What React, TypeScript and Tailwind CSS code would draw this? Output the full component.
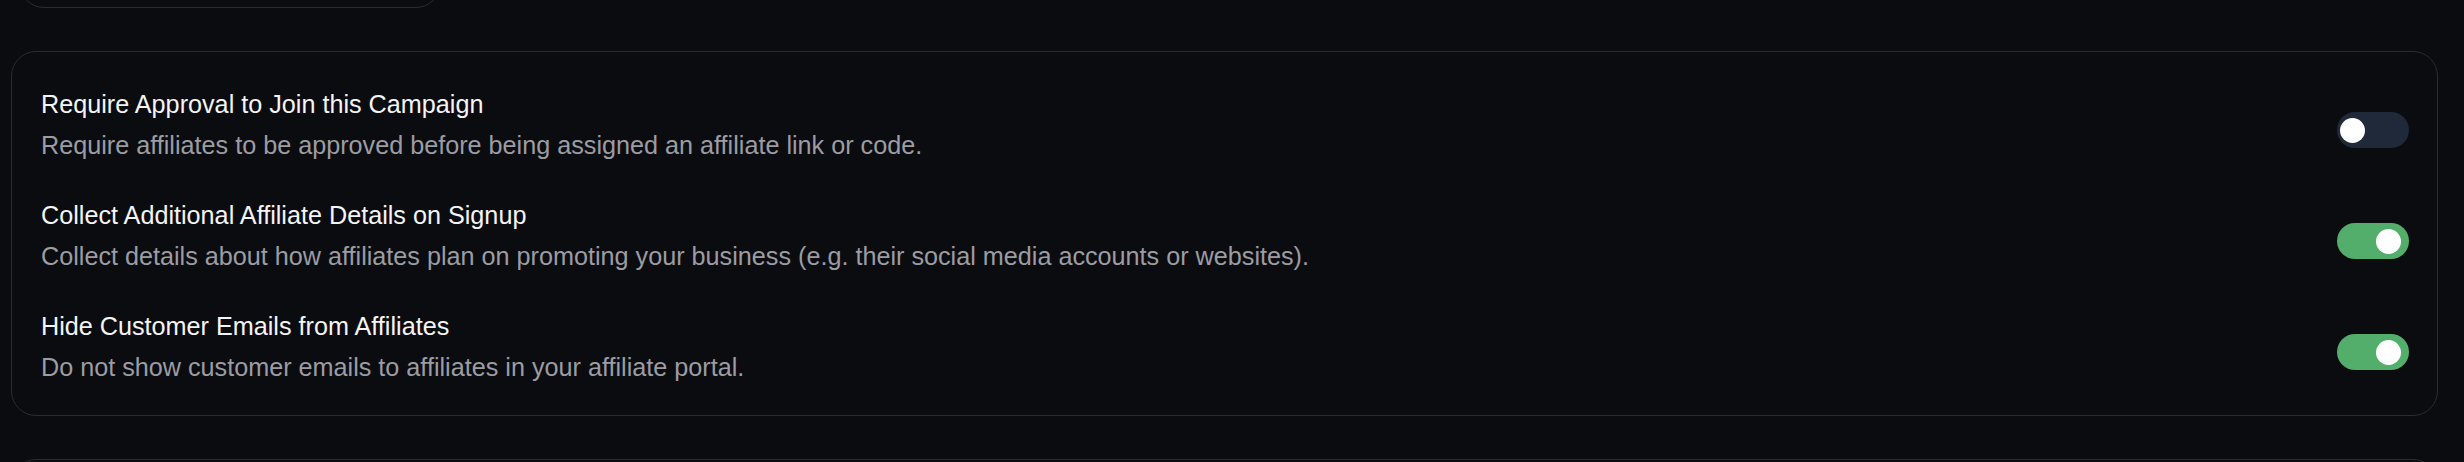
import React from "react";

const rows = [
  {
    title: "Require Approval to Join this Campaign",
    desc: "Require affiliates to be approved before being assigned an affiliate link or code.",
    on: false,
  },
  {
    title: "Collect Additional Affiliate Details on Signup",
    desc: "Collect details about how affiliates plan on promoting your business (e.g. their social media accounts or websites).",
    on: true,
  },
  {
    title: "Hide Customer Emails from Affiliates",
    desc: "Do not show customer emails to affiliates in your affiliate portal.",
    on: true,
  },
];

function Toggle({ on }: { on: boolean }) {
  return (
    <div
      className={
        on
          ? "relative mt-[26px] h-[36px] w-[72px] shrink-0 rounded-full bg-[#53ae6b]"
          : "relative mt-[26px] h-[36px] w-[72px] shrink-0 rounded-full bg-[#1f2939]"
      }
    >
      <div
        className={
          on
            ? "absolute top-[6px] left-[39px] h-[25px] w-[25px] rounded-full bg-white"
            : "absolute top-[6px] left-[3px] h-[25px] w-[25px] rounded-full bg-white"
        }
      />
    </div>
  );
}

export default function App() {
  return (
    <div
      className="h-[462px] w-[2464px] overflow-hidden bg-[#0b0c10] pl-[11px]"
      style={{ fontFamily: '"Liberation Sans", Arial, sans-serif' }}
    >
      <div className="ml-[8px] mt-[-53px] h-[61px] w-[422px] rounded-[25px] border border-[#2a2c34]" />
      <div className="mt-[43px] flex w-[2427px] flex-col gap-[33px] rounded-[25px] border border-[#2a2c34] pl-[29px] pr-[28px] pt-[33.5px] pb-[29.5px]">
        {rows.map((r) => (
          <div key={r.title} className="flex items-start justify-between">
            <div className="flex flex-col gap-[4px]">
              <div className="text-[25.2px] leading-[37px] text-[#f4f4f5]">{r.title}</div>
              <div className="text-[25.2px] leading-[37px] text-[#9c9ca3]">{r.desc}</div>
            </div>
            <Toggle on={r.on} />
          </div>
        ))}
      </div>
      <div className="mt-[43px] h-[200px] w-[2427px] rounded-[25px] border border-[#2a2c34]" />
    </div>
  );
}
